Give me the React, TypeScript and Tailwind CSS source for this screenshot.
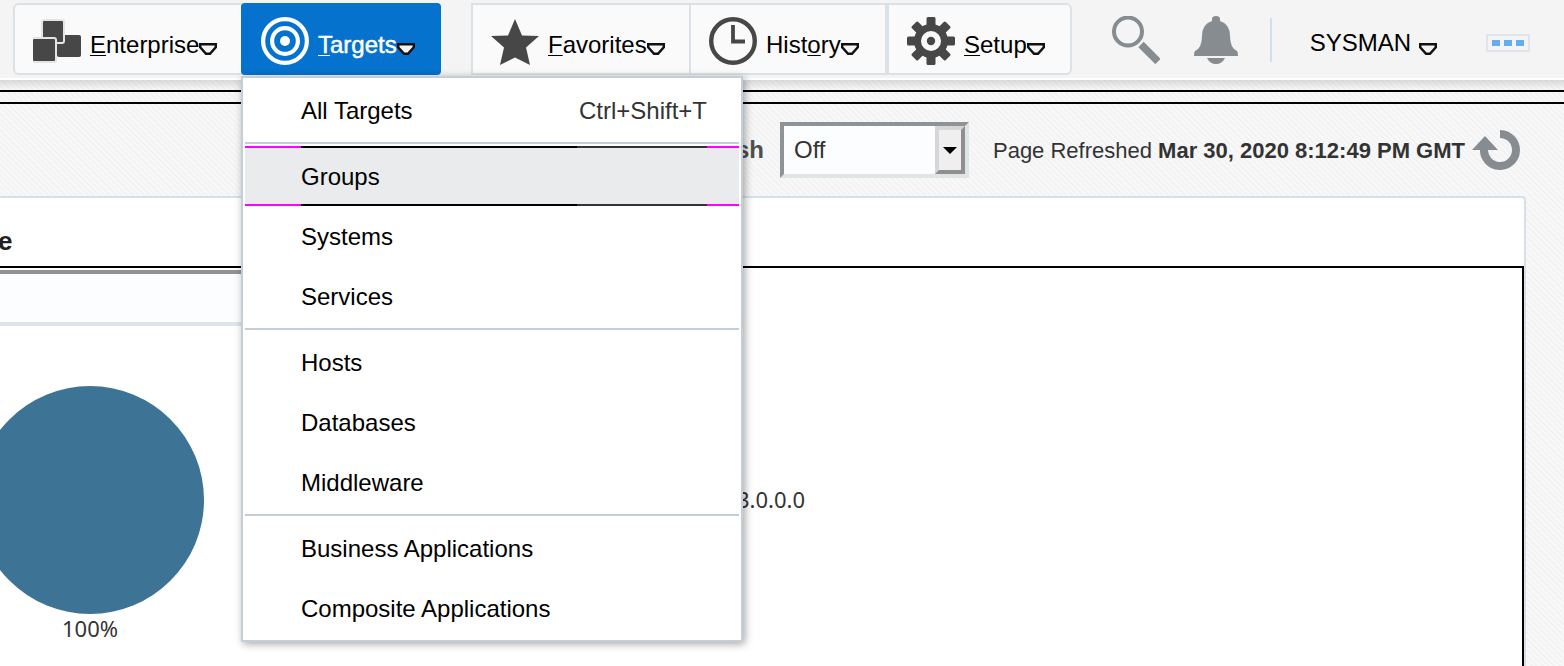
import React from "react";

type IconProps = { className?: string };

const CubesIcon = () => (
  <svg width="48" height="48" viewBox="0 0 48 48" fill="#474747" aria-hidden="true">
    <rect x="24" y="18" width="24" height="22" rx="2" />
    <rect x="9" y="3" width="22" height="23" rx="2" stroke="#e4e4e4" strokeWidth="2" />
    <rect x="-1" y="21" width="24" height="24" rx="2" stroke="#e4e4e4" strokeWidth="2" />
  </svg>
);

const TargetIcon = () => (
  <svg width="48" height="48" viewBox="0 0 48 48" fill="none" stroke="#fff" aria-hidden="true">
    <circle cx="24" cy="24" r="21.9" strokeWidth="4.2" />
    <circle cx="24" cy="24" r="12.9" strokeWidth="4.2" />
    <circle cx="24" cy="24" r="5" fill="#fff" stroke="none" />
  </svg>
);

const StarIcon = () => (
  <svg width="48" height="48" viewBox="0 0 48 48" fill="#474747" aria-hidden="true">
    <path d="M24 2l7 16.5 17 .5-13 11.5L39 48l-15-7.5L9 48l4-17.5L0 19l17-.5z" />
  </svg>
);

const ClockIcon = () => (
  <svg width="48" height="48" viewBox="0 0 48 48" fill="none" stroke="#474747" aria-hidden="true">
    <circle cx="24" cy="24" r="21.8" strokeWidth="4.4" />
    <path d="M24 8v16.5h12" strokeWidth="3.8" />
  </svg>
);

const GearIcon = () => (
  <svg width="48" height="48" viewBox="0 0 48 48" aria-hidden="true">
    <g fill="#474747">
      {[0, 45, 90, 135].map((angle) => (
        <rect key={angle} x="19.5" y="0" width="9" height="48" rx="1.5" transform={`rotate(${angle} 24 24)`} />
      ))}
      <circle cx="24" cy="24" r="17" />
    </g>
    <circle cx="24" cy="24" r="10" fill="#fafafa" />
    <circle cx="24" cy="24" r="4.2" fill="#474747" />
  </svg>
);

const SearchIcon = () => (
  <svg width="48" height="48" viewBox="0 0 48 48" fill="none" stroke="#878c90" aria-hidden="true">
    <circle cx="16" cy="15.5" r="14" strokeWidth="4" />
    <path d="M29 28.5L46 45.5" strokeWidth="7.5" />
  </svg>
);

const BellIcon = () => (
  <svg width="46" height="48" viewBox="0 0 46 48" fill="#878c90" aria-hidden="true">
    <path d="M19 3q0-3 4-3t4 3v2q10 3 10 15 0 12 7 15 1 1 1 5H1q0-4 1-5 7-3 7-15Q9 8 19 5z" />
    <path d="M14 42h18q-3 6-9 6t-9-6z" />
  </svg>
);

const RefreshIcon = () => (
  <svg width="48" height="40" viewBox="0 0 48 40" aria-hidden="true">
    <path d="M28 4A16 16 0 1 1 12 19" fill="none" stroke="#878c90" strokeWidth="8" />
    <path d="M0 20L13 6l13 14z" fill="#878c90" />
  </svg>
);

const Caret = ({ className }: IconProps) => (
  <svg className={className} width="18" height="12" viewBox="0 0 18 12" aria-hidden="true">
    <path d="M1.2 1.2h15.6v3L11 10.8H7L1.2 4.2z" fill="#f4f4f4" stroke="#111" strokeWidth="2.4" />
  </svg>
);

type NavButtonProps = {
  icon: React.ReactNode;
  before?: string;
  accessKey: string;
  after: string;
  className: string;
  expanded?: boolean;
};

function NavButton({ icon, before = "", accessKey, after, className, expanded = false }: NavButtonProps) {
  return (
    <button
      type="button"
      aria-haspopup="menu"
      aria-expanded={expanded}
      className={`flex h-[72px] items-center border-2 pt-1 pl-[18px] ${className}`}
    >
      {icon}
      <span className="mt-2 ml-[9px] flex items-center">
        <span>
          {before}
          <span className="underline decoration-1 underline-offset-2">{accessKey}</span>
          {after}
        </span>
        <Caret className="mt-2" />
      </span>
    </button>
  );
}

type Item = { label: string; shortcut?: string; active?: boolean };

const groups: Item[][] = [
  [{ label: "All Targets", shortcut: "Ctrl+Shift+T" }],
  [{ label: "Groups", active: true }, { label: "Systems" }, { label: "Services" }],
  [{ label: "Hosts" }, { label: "Databases" }, { label: "Middleware" }],
  [{ label: "Business Applications" }, { label: "Composite Applications" }],
];

function MenuRow({ label, shortcut, active }: Item) {
  const edge = active ? "border-[#ff00ff]" : "border-transparent";
  const main = active ? "border-black" : "border-transparent";
  const keys = active ? "border-[#333]" : "border-transparent";
  return (
    <button
      type="button"
      role="menuitem"
      className={`grid h-[60px] w-full grid-cols-[56px_1fr_130px_32px] grid-rows-[60px] text-left leading-[58px] ${active ? "bg-[#eaebed]" : ""}`}
    >
      <span className={`h-full border-y-2 ${edge}`} />
      <span className={`h-full border-y-2 whitespace-nowrap ${main}`}>{label}</span>
      <span className={`h-full border-y-2 text-right whitespace-nowrap text-[#333] ${keys}`}>{shortcut}</span>
      <span className={`h-full border-y-2 ${edge}`} />
    </button>
  );
}

function TargetsMenu() {
  return (
    <div
      role="menu"
      aria-label="Targets"
      className="absolute top-[73px] left-0 z-10 w-[502px] divide-y-2 divide-[#c4ced7] border-2 border-[#c4ced7] bg-white px-0.5 shadow-[2px_2px_8px_rgba(0,0,0,0.35)]"
    >
      {groups.map((items) => (
        <div key={items[0].label} className="py-0.5">
          {items.map((item) => (
            <MenuRow key={item.label} {...item} />
          ))}
        </div>
      ))}
    </div>
  );
}

export default function App() {
  return (
    <div className="flex min-h-screen flex-col overflow-hidden bg-[repeating-linear-gradient(45deg,#f8f8f8_0px,#f8f8f8_2px,#f3f3f3_2px,#f3f3f3_4px)] font-['Liberation_Sans',Arial,sans-serif] text-2xl text-black">
      <header className="flex h-20 items-start justify-between border-b-2 border-white bg-[#f4f4f4] pt-[3px] pr-[34px] pl-[13px]">
        <nav className="flex" aria-label="Main">
          <NavButton
            icon={<CubesIcon />}
            accessKey="E"
            after="nterprise"
            className="w-[230px] rounded-l-md border-[#dbe2e7] bg-[#fafafa]"
          />
          <div className="relative -ml-0.5">
            <NavButton
              icon={<TargetIcon />}
              accessKey="T"
              after="argets"
              expanded
              className="w-[200px] rounded-[4px] border-[#0572ce] bg-[#0572ce] text-white [-webkit-text-stroke:0.5px_white]"
            />
            <TargetsMenu />
          </div>
          <div className="ml-[30px] flex">
            <NavButton
              icon={<StarIcon />}
              accessKey="F"
              after="avorites"
              className="w-[218px] border-r-0 border-[#dbe2e7] bg-[#fafafa]"
            />
            <NavButton
              icon={<ClockIcon />}
              before="Hist"
              accessKey="o"
              after="ry"
              className="w-[198px] border-[#dbe2e7] bg-[#fafafa]"
            />
            <NavButton
              icon={<GearIcon />}
              accessKey="S"
              after="etup"
              className="w-[185px] rounded-r-md border-[#dbe2e7] bg-[#fafafa]"
            />
          </div>
        </nav>
        <div className="flex h-[74px] items-center">
          <button type="button" aria-label="Search">
            <SearchIcon />
          </button>
          <button type="button" aria-label="Notifications" className="ml-[33px]">
            <BellIcon />
          </button>
          <span className="ml-[31px] h-11 w-0.5 bg-[#d5dee5]" />
          <button type="button" className="ml-[38px] flex items-center gap-2 pt-1.5 whitespace-nowrap">
            SYSMAN
            <Caret className="mt-3" />
          </button>
          <button
            type="button"
            aria-label="More"
            className="mt-1.5 ml-[49px] flex h-[18px] w-11 items-center justify-center gap-1 border-2 border-[#dfe5ea]"
          >
            <span className="h-1.5 w-2 bg-[#64aeee]" />
            <span className="h-1.5 w-2 bg-[#64aeee]" />
            <span className="h-1.5 w-2 bg-[#64aeee]" />
          </button>
        </div>
      </header>

      <div className="h-2.5 bg-linear-to-b from-black/12 to-transparent" />
      <div className="h-3.5 border-y-2 border-black" />

      <div className="flex h-[92px] items-center justify-end pr-11 text-[22px] whitespace-nowrap text-[#333]">
        <label htmlFor="auto-refresh" className="mr-4 text-2xl font-bold text-[#4f4f4f]">
          sh
        </label>
        <span className="grid h-14 w-[189px] border-4 border-t-[#8f9396] border-r-[#dfe4e6] border-b-[#dfe4e6] border-l-[#8f9396] bg-[#fcfdff]">
          <select
            id="auto-refresh"
            className="col-start-1 row-start-1 appearance-none bg-transparent pl-2.5 text-2xl text-[#333]"
          >
            <option>Off</option>
          </select>
          <span className="pointer-events-none col-start-1 row-start-1 flex w-[30px] items-center justify-center justify-self-end border-4 border-t-[#d6d6d6] border-r-[#8f8f8f] border-b-[#8f8f8f] border-l-[#d6d6d6] bg-[#efefef]">
            <svg width="14" height="7" viewBox="0 0 14 7" aria-hidden="true">
              <path d="M0 0h14L7 7z" />
            </svg>
          </span>
        </span>
        <p className="ml-6 pt-0.5">
          Page Refreshed <b>Mar 30, 2020 8:12:49 PM GMT</b>
        </p>
        <button type="button" aria-label="Refresh" className="ml-[7px]">
          <RefreshIcon />
        </button>
      </div>

      <main className="mr-[38px] flex flex-1 flex-col rounded-tr-sm border-t-2 border-r-2 border-[#d6e0e8] bg-white">
        <h2 className="-ml-0.5 flex h-[68px] items-center pt-[18px] text-[26px] font-bold text-[#222]">e</h2>
        <section className="flex-1 border-t-2 border-r-2 border-black pt-0.5">
          <div className="h-14 w-[300px] border-y-4 border-t-[#8f9396] border-b-[#dfe4e6] bg-[#fbfdff]" />
          <div className="mt-[60px] grid grid-cols-[737px_1fr] font-['Noto_Sans',sans-serif] text-[22px] leading-7 text-[#333]">
            <figure className="-ml-6 w-[228px]">
              <svg className="block h-[228px] w-full" viewBox="0 0 228 228" role="img" aria-label="Status">
                <circle cx="114" cy="114" r="114" fill="#3d7394" />
              </svg>
              <figcaption className="text-center">100%</figcaption>
            </figure>
            <p className="flex h-[226px] items-center">3.0.0.0</p>
          </div>
        </section>
      </main>
    </div>
  );
}
